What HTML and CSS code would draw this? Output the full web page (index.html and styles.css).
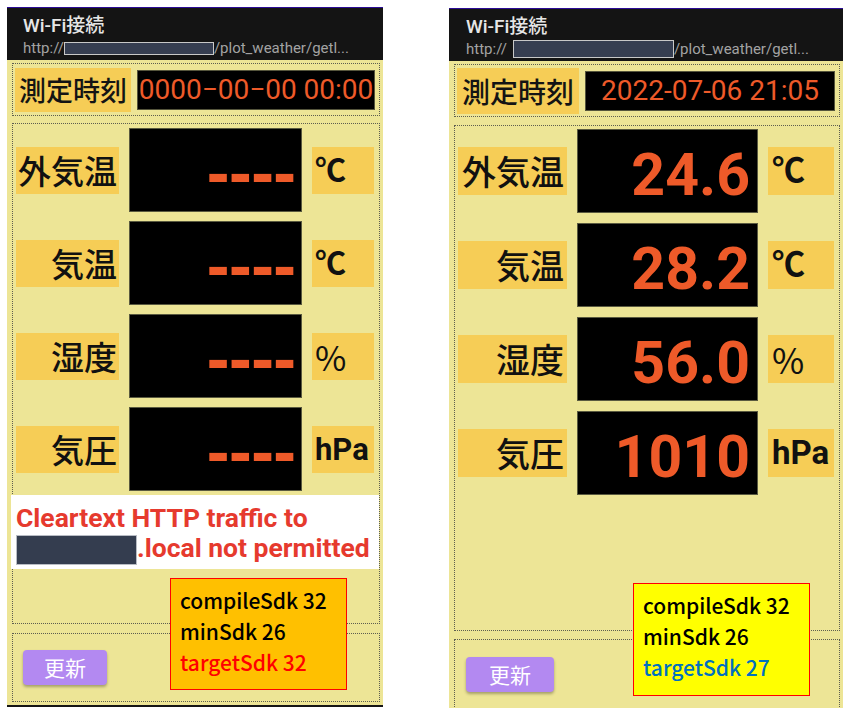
FILE: index.html
```html
<!DOCTYPE html>
<html lang="ja">
<head>
<meta charset="utf-8">
<title>Weather</title>
<link rel="stylesheet" href="styles.css">
</head>
<body>
<div class="phone phone-a">
  <header class="appbar">
    <div class="title">Wi-Fi接続</div>
    <div class="url">http://<span class="redact"></span>/plot_weather/getl...</div>
  </header>
  <div class="content">
    <section class="box time-box">
      <div class="tlabel">測定時刻</div>
      <div class="tdisp">0000−00−00 00:00</div>
    </section>
    <section class="box main-box">
      <div class="row"><div class="lbl">外気温</div><div class="disp dash">----</div><div class="unit">℃</div></div>
      <div class="row"><div class="lbl">気温</div><div class="disp dash">----</div><div class="unit">℃</div></div>
      <div class="row"><div class="lbl">湿度</div><div class="disp dash">----</div><div class="unit pct">%</div></div>
      <div class="row"><div class="lbl">気圧</div><div class="disp dash">----</div><div class="unit">hPa</div></div>
      <div class="error">Cleartext HTTP traffic to<br><span class="redact-err"></span>.local not permitted</div>
    </section>
    <section class="box btn-box">
      <button class="btn">更新</button>
    </section>
  </div>
  <div class="sdk sdk-a">
    <div>compileSdk 32</div>
    <div>minSdk 26</div>
    <div class="target">targetSdk 32</div>
  </div>
</div>

<div class="phone phone-b">
  <header class="appbar">
    <div class="title">Wi-Fi接続</div>
    <div class="url">http://<span class="redact"></span>/plot_weather/getl...</div>
  </header>
  <div class="content">
    <section class="box time-box">
      <div class="tlabel">測定時刻</div>
      <div class="tdisp">2022-07-06 21:05</div>
    </section>
    <section class="box main-box">
      <div class="row"><div class="lbl">外気温</div><div class="disp">24.6</div><div class="unit">℃</div></div>
      <div class="row"><div class="lbl">気温</div><div class="disp">28.2</div><div class="unit">℃</div></div>
      <div class="row"><div class="lbl">湿度</div><div class="disp">56.0</div><div class="unit pct">%</div></div>
      <div class="row"><div class="lbl">気圧</div><div class="disp">1010</div><div class="unit">hPa</div></div>
    </section>
    <section class="box btn-box">
      <button class="btn">更新</button>
    </section>
  </div>
  <div class="sdk sdk-b">
    <div>compileSdk 32</div>
    <div>minSdk 26</div>
    <div class="target">targetSdk 27</div>
  </div>
</div>
</body>
</html>
```
FILE: styles.css
```css
* { box-sizing: border-box; }
html, body { margin: 0; padding: 0; }
body {
  background: #ffffff;
  display: flex;
  align-items: flex-start;
  font-family: Roboto, "Noto Sans CJK JP", sans-serif;
  width: 850px;
  height: 718px;
  overflow: hidden;
}

.phone {
  position: relative;
  border-top: 1px solid #2c0c96;
  overflow: hidden;
}
.phone-a {
  width: 376px;
  margin: 7px 0 0 7px;
  border-bottom: 2px solid #151515;
  --lblw: 103px;
  --dispw: 173px;
  --unitw: 62px;
  --rowgap: 9px;
  --tlw: 116px;
  --padx: 16px;
}
.phone-b {
  width: 394px;
  height: 700px;
  margin: 8px 0 0 66px;
  --lblw: 109px;
  --dispw: 181px;
  --unitw: 66px;
  --rowgap: 10px;
  --tlw: 122px;
  --padx: 17px;
}

.appbar {
  height: 52px;
  background: #141414;
  padding: 7px 0 0 var(--padx);
}
.title {
  font-family: Roboto, "Noto Sans CJK JP", sans-serif;
  font-weight: 500;
  font-size: 19px;
  line-height: 22px;
  color: #e6e6e6;
}
.url {
  margin-top: 2px;
  font-size: 15px;
  line-height: 18px;
  color: #a3a3a3;
  white-space: nowrap;
}
.redact {
  display: inline-block;
  vertical-align: -2px;
  width: 150px;
  height: 13px;
  background: #363e51;
  border: 1px solid #c8c8c8;
}
.phone-b .redact {
  width: 161px;
  height: 18px;
  margin-left: 6px;
  vertical-align: -4px;
}

.content {
  background: #ede596;
  padding: 3px 3px 3px 5px;
  display: flex;
  flex-direction: column;
}
.box {
  border: 1px dotted #5e5e50;
}

.time-box {
  height: 53px;
  display: flex;
  align-items: center;
  padding: 0 4px 0 2px;
  gap: 6px;
}
.tlabel {
  width: var(--tlw);
  height: 44px;
  background: #f6cd56;
  font-family: "Noto Sans CJK JP", sans-serif;
  font-weight: 500;
  font-size: 27px;
  line-height: 44px;
  text-align: center;
  color: #141414;
}
.phone-b .tlabel { height: 46px; line-height: 46px; font-size: 28px; }
.tdisp {
  flex: 1;
  height: 40px;
  background: #000;
  border: 1px solid #55553c;
  color: #ee5a29;
  font-family: Roboto, sans-serif;
  font-size: 28px;
  line-height: 38px;
  text-align: center;
  white-space: nowrap;
  overflow: hidden;
}

.main-box {
  margin-top: 7px;
  height: 501px;
  padding: 4px 0 0 3px;
  display: flex;
  flex-direction: column;
  gap: var(--rowgap);
}
.phone-b .main-box {
  margin-top: 8px;
  height: 506px;
  padding-top: 3px;
}
.row {
  display: grid;
  grid-template-columns: var(--lblw) var(--dispw) var(--unitw);
  column-gap: 10px;
  align-items: center;
  height: 84px;
}
.lbl {
  height: 47px;
  background: #f6cd56;
  font-family: "Noto Sans CJK JP", sans-serif;
  font-weight: 500;
  font-size: 33px;
  line-height: 47px;
  text-align: right;
  padding-right: 2px;
  color: #111;
}
.phone-b .lbl { height: 48px; line-height: 48px; font-size: 34px; padding-right: 3px; }
.disp {
  height: 84px;
  background: #000;
  border: 1px solid #5a5a40;
  color: #ee5a29;
  font-family: Roboto, sans-serif;
  font-weight: 700;
  font-size: 59px;
  line-height: 76px;
  padding: 7px 7px 0 0;
  text-align: right;
  white-space: nowrap;
}
.disp.dash {
  font-family: "DejaVu Sans", sans-serif;
  font-size: 57px;
  letter-spacing: -1.5px;
  padding-right: 6px;
}
.unit {
  height: 47px;
  background: #f6cd56;
  font-family: Roboto, "Noto Sans CJK JP", sans-serif;
  font-weight: 700;
  font-size: 31px;
  line-height: 47px;
  padding-left: 3px;
  color: #111;
  white-space: nowrap;
}
.phone-b .unit { height: 48px; line-height: 48px; font-size: 33px; padding-left: 4px; }
.unit.pct {
  font-family: "Noto Sans CJK JP", sans-serif;
  font-weight: 400;
  font-size: 34px;
}
.phone-b .unit.pct { font-size: 35px; }

.error {
  margin: calc(4px - var(--rowgap)) 0 0 -5px;
  width: 368px;
  height: 74px;
  background: #ffffff;
  color: #e63a2e;
  font-family: Roboto, sans-serif;
  font-weight: 700;
  font-size: 26.5px;
  line-height: 30px;
  padding: 8px 0 0 5px;
  white-space: nowrap;
}
.redact-err {
  display: inline-block;
  width: 121px;
  height: 30px;
  vertical-align: -8px;
  background: #343d4f;
  border: 1px solid #b8bcc4;
}

.btn-box {
  margin-top: 9px;
  height: 69px;
  padding: 16px 0 0 10px;
}
.phone-b .btn-box {
  margin-top: 8px;
  height: 80px;
  padding: 17px 0 0 11px;
}
.btn {
  width: 84px;
  height: 35px;
  border: none;
  border-radius: 4px;
  background: #b389f1;
  color: #ffffff;
  font-family: "Noto Sans CJK JP", sans-serif;
  font-size: 21px;
  line-height: 35px;
  padding: 0;
  box-shadow: 0 2px 3px rgba(0, 0, 0, 0.3);
}
.phone-b .btn { width: 88px; }

.sdk {
  position: absolute;
  width: 177px;
  height: 112px;
  border: 1px solid #ff0000;
  padding: 6px 0 0 9px;
  font-family: "Noto Sans CJK JP", sans-serif;
  font-weight: 500;
  font-size: 21px;
  line-height: 31px;
  color: #000;
}
.sdk-a {
  left: 163px;
  top: 570px;
  background: #ffc000;
}
.sdk-a .target { color: #ff0000; }
.sdk-b {
  left: 184px;
  top: 574px;
  height: 113px;
  background: #ffff00;
}
.sdk-b .target { color: #0070c0; }
```
